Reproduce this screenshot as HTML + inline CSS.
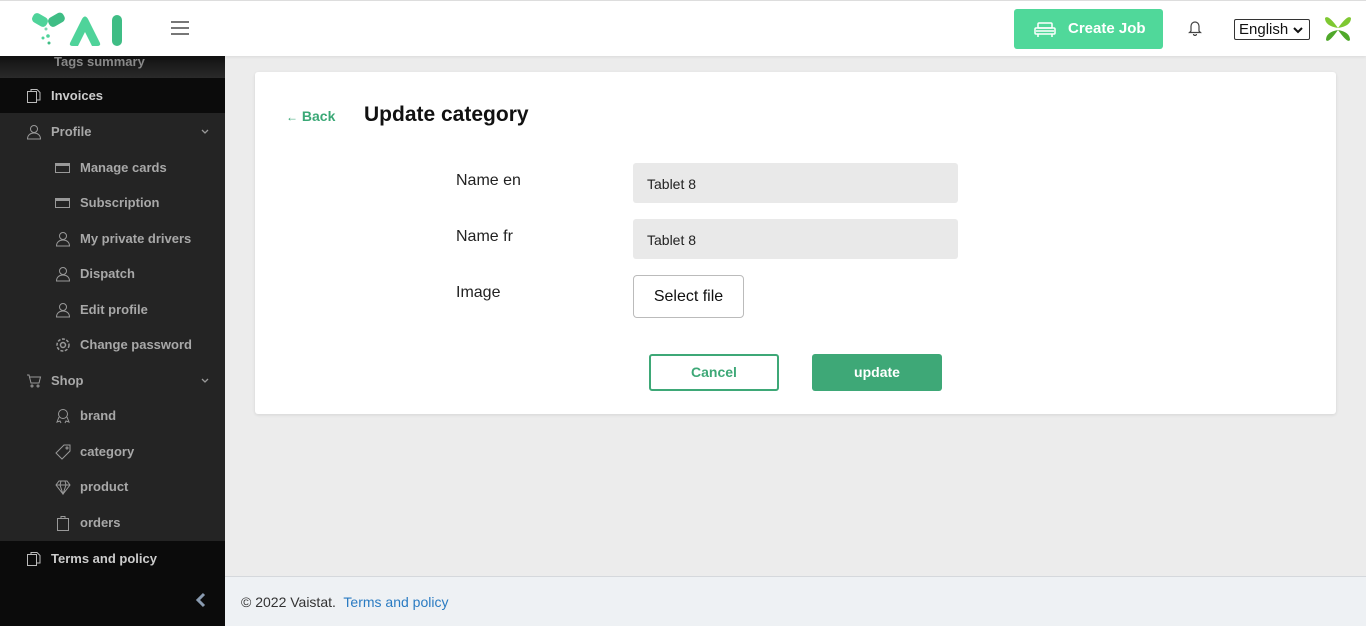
<!DOCTYPE html>
<html><head><style>
*{box-sizing:border-box;margin:0;padding:0}
body{width:1366px;height:626px;overflow:hidden;font-family:"Liberation Sans",sans-serif;background:#ececec;position:relative}
.top{position:absolute;left:0;top:0;width:1366px;height:56px;background:#fff;border-top:1px solid #ddd;box-shadow:0 1px 3px rgba(0,0,0,.08);z-index:2}
.side{position:absolute;left:0;top:56px;width:225px;height:570px;background:#242424;color:#a8a8a8;font-size:13px;font-weight:bold}
.it{position:absolute;left:0;width:225px;height:35px;display:flex;align-items:center}
.it svg{position:absolute}
.main{position:absolute;left:51px}
.sub{position:absolute;left:80px}
.card{position:absolute;left:255px;top:72px;width:1081px;height:342px;background:#fff;border-radius:3px;box-shadow:0 1px 3px rgba(0,0,0,.1)}
.lbl{position:absolute;font-size:16px;color:#222}
.inp{position:absolute;left:378px;width:325px;height:40px;background:#e9e9e9;border-radius:3px;font-size:14px;color:#222;padding:13px 14px}
.foot{position:absolute;left:225px;top:576px;width:1141px;height:50px;background:#eef1f4;border-top:1px solid #d5d8dc;font-size:14px;color:#333;padding:17px 16px}
</style></head><body>
<div class="top">
 <svg width="100" height="48" style="position:absolute;left:30px;top:6px" viewBox="0 0 100 48">
  <rect x="2" y="8" width="16" height="10" rx="4" fill="#4fd39a" transform="rotate(30 10 13)"/>
  <rect x="18" y="8" width="17" height="10" rx="4" fill="#3fbd85" transform="rotate(-30 26 13)"/>
  <circle cx="16" cy="22" r="1.5" fill="#7fd6b0"/><circle cx="18" cy="29" r="1.8" fill="#4fd39a"/><circle cx="13" cy="31" r="1.5" fill="#4fd39a"/><circle cx="19" cy="36" r="1.5" fill="#3fbd85"/>
  <path d="M40 36 L52 12 Q55 7 58 12 L70 36 Q71 39 67 39 L62 39 L55 25 L48 39 L43 39 Q39 39 40 36Z" fill="#4fd39a"/>
  <rect x="82" y="8" width="10" height="31" rx="5" fill="#3fbd85"/>
 </svg>
 <div style="position:absolute;left:171px;top:20px;width:18px;height:2px;background:#777;box-shadow:0 6px 0 #777,0 12px 0 #777"></div>
 <div style="position:absolute;left:1014px;top:8px;width:149px;height:40px;background:#50d89a;border-radius:3px;color:#fff;font-weight:bold;font-size:15px;padding:11px 0 0 54px">Create Job</div>
 <svg width="22" height="16" style="position:absolute;left:1034px;top:21px" fill="none" stroke="#fff" stroke-width="1.5"><rect x="4" y="1" width="14" height="5" rx="1"/><rect x="1" y="6" width="20" height="6" rx="1"/><path d="M4 12v3M18 12v3M2 9h18"/></svg>
 <svg width="14" height="16" style="position:absolute;left:1188px;top:19px" fill="none" stroke="#444" stroke-width="1.2"><path d="M3 11V6a4 4 0 018 0v5l1.5 1.5h-11z M5.5 14a1.5 1.5 0 003 0"/></svg>
 <div style="position:absolute;left:1234px;top:18px;width:76px;height:21px;border:1px solid #333;border-radius:2px;font-size:15px;padding:1px 4px;color:#111">English <svg width="10" height="8" style="position:absolute;right:6px;top:6px" fill="none" stroke="#111" stroke-width="2"><path d="M1 2l4 4 4-4"/></svg></div>
 <svg width="30" height="30" style="position:absolute;left:1323px;top:13px" viewBox="0 0 30 30"><path d="M15 14 Q5 0 2 4 Q2 12 15 14Z M15 14 Q25 0 28 4 Q28 12 15 14Z" fill="#7ec832"/><path d="M15 16 Q5 30 3 26 Q3 18 15 16Z M15 16 Q25 30 27 26 Q27 18 15 16Z" fill="#4fa82a"/></svg>
</div>
<div class="side">
 <div style="position:absolute;top:0;left:0;width:225px;height:22px;background:linear-gradient(#111,#2a2a2a)"></div>
 <div style="position:absolute;left:54px;top:-2px;font-size:13px;color:#888">Tags summary</div>
 <div class="it" style="top:22px;background:#0b0b0b;color:#ccc"><svg width="16" height="16" style="left:26px" fill="none" stroke="#bbb"><rect x="1.5" y="3.5" width="9" height="11"/><path d="M5 3V1.5h6l3 3V12h-3"/></svg><span class="main">Invoices</span></div>
 <div class="it" style="top:58px"><svg width="16" height="16" style="left:26px" fill="none" stroke="#999"><circle cx="8" cy="5" r="3.5"/><path d="M1.5 15c0-4 3-6 6.5-6s6.5 2 6.5 6z"/></svg><span class="main">Profile</span><svg width="8" height="6" style="left:201px" fill="none" stroke="#999" stroke-width="1.3"><path d="M1 1l3 3 3-3"/></svg></div>
 <div class="it" style="top:94px"><span class="sub" style="left:55px;width:15px;height:10px;border:1.5px solid #999;border-top-width:3px"></span><span class="sub">Manage cards</span></div>
 <div class="it" style="top:129px"><span class="sub" style="left:55px;width:15px;height:10px;border:1.5px solid #999;border-top-width:3px"></span><span class="sub">Subscription</span></div>
 <div class="it" style="top:165px"><svg width="16" height="16" style="left:55px" fill="none" stroke="#999"><circle cx="8" cy="5" r="3.5"/><path d="M1.5 15c0-4 3-6 6.5-6s6.5 2 6.5 6z"/></svg><span class="sub">My private drivers</span></div>
 <div class="it" style="top:200px"><svg width="16" height="16" style="left:55px" fill="none" stroke="#999"><circle cx="8" cy="5" r="3.5"/><path d="M1.5 15c0-4 3-6 6.5-6s6.5 2 6.5 6z"/></svg><span class="sub">Dispatch</span></div>
 <div class="it" style="top:236px"><svg width="16" height="16" style="left:55px" fill="none" stroke="#999"><circle cx="8" cy="5" r="3.5"/><path d="M1.5 15c0-4 3-6 6.5-6s6.5 2 6.5 6z"/></svg><span class="sub">Edit profile</span></div>
 <div class="it" style="top:271px"><svg width="16" height="16" style="left:55px" fill="none" stroke="#999" stroke-width="1.5"><circle cx="8" cy="8" r="2.5"/><circle cx="8" cy="8" r="6" stroke-dasharray="3 1.5"/></svg><span class="sub">Change password</span></div>
 <div class="it" style="top:307px"><svg width="16" height="16" style="left:26px" fill="none" stroke="#999"><path d="M1 2h2l2 8h8l1.5-6H4"/><circle cx="6" cy="13" r="1"/><circle cx="12" cy="13" r="1"/></svg><span class="main">Shop</span><svg width="8" height="6" style="left:201px" fill="none" stroke="#999" stroke-width="1.3"><path d="M1 1l3 3 3-3"/></svg></div>
 <div class="it" style="top:342px"><svg width="16" height="16" style="left:55px" fill="none" stroke="#999"><circle cx="8" cy="6" r="4.5"/><path d="M4 9l-2 5 3-1 1 2M12 9l2 5-3-1-1 2"/></svg><span class="sub">brand</span></div>
 <div class="it" style="top:378px"><svg width="16" height="16" style="left:55px" fill="none" stroke="#999"><path d="M9 1h6v6l-8 8-6-6z"/><circle cx="12" cy="4" r="1"/></svg><span class="sub">category</span></div>
 <div class="it" style="top:413px"><svg width="16" height="16" style="left:55px" fill="none" stroke="#999"><path d="M4 2h8l3 4-7 9-7-9z M1 6h14M6 2 5 6l3 9 3-9-1-4"/></svg><span class="sub">product</span></div>
 <div class="it" style="top:449px"><svg width="16" height="16" style="left:55px" fill="none" stroke="#999"><rect x="2.5" y="3.5" width="11" height="12"/><path d="M6 3.5V1.5h4v2"/></svg><span class="sub">orders</span></div>
 <div style="position:absolute;top:485px;left:0;width:225px;height:85px;background:#0b0b0b"></div>
 <div class="it" style="top:485px;color:#ccc"><svg width="16" height="16" style="left:26px" fill="none" stroke="#bbb"><rect x="1.5" y="3.5" width="9" height="11"/><path d="M5 3V1.5h6l3 3V12h-3"/></svg><span class="main">Terms and policy</span></div>
 <svg width="12" height="16" style="position:absolute;left:194px;top:536px" fill="none" stroke="#8a9bb0" stroke-width="3"><path d="M10 2 4 8l6 6"/></svg>
</div>
<div class="card">
 <div style="position:absolute;left:31px;top:36px;color:#3aa876;font-size:14px;font-weight:bold"><span style="font-size:12px">&#8592;</span> Back</div>
 <div style="position:absolute;left:109px;top:31px;font-size:21px;font-weight:bold;color:#111">Update category</div>
 <div class="lbl" style="left:201px;top:100px">Name en</div>
 <div class="inp" style="top:91px">Tablet 8</div>
 <div class="lbl" style="left:201px;top:156px">Name fr</div>
 <div class="inp" style="top:147px">Tablet 8</div>
 <div class="lbl" style="left:201px;top:212px">Image</div>
 <div style="position:absolute;left:378px;top:203px;width:111px;height:43px;border:1px solid #bbb;border-radius:4px;font-size:16px;text-align:center;line-height:41px;color:#111">Select file</div>
 <div style="position:absolute;left:394px;top:282px;width:130px;height:37px;border:2px solid #3ea877;border-radius:3px;color:#3ea877;font-size:14px;font-weight:bold;text-align:center;line-height:33px">Cancel</div>
 <div style="position:absolute;left:557px;top:282px;width:130px;height:37px;background:#3ea877;border-radius:3px;color:#fff;font-size:14px;font-weight:bold;text-align:center;line-height:37px">update</div>
</div>
<div class="foot">© 2022 Vaistat.&nbsp; <span style="color:#2a7bc2">Terms and policy</span></div>
</body></html>
